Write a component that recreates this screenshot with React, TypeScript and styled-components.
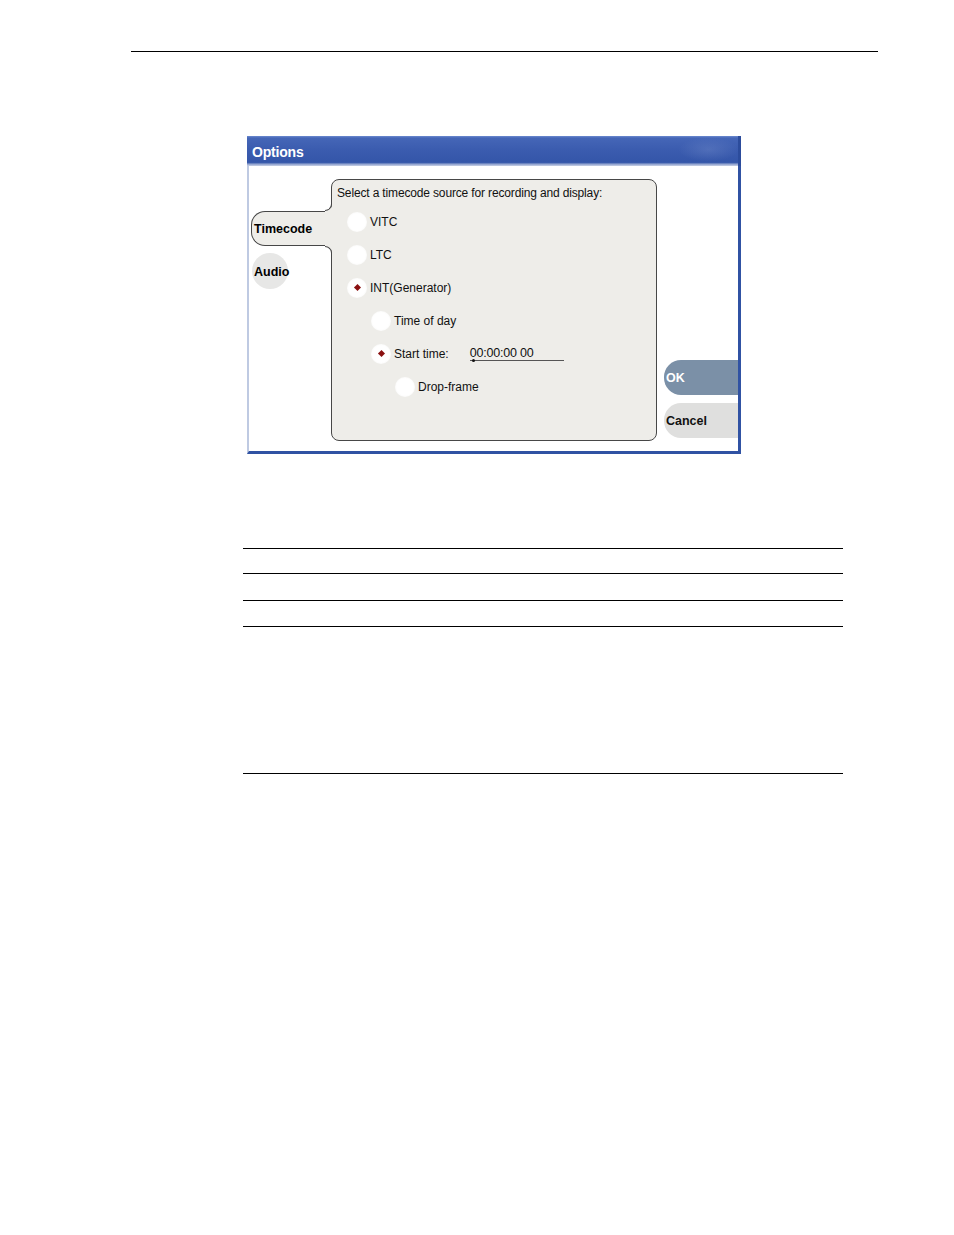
import React from "react";
import styled, { createGlobalStyle } from "styled-components";

const PANEL = "#eeede9";
const EDGE = "#474747";

const Global = createGlobalStyle`
  html, body { margin: 0; padding: 0; background: #fff; }
  body { font-family: "Liberation Sans", Arial, sans-serif; color: #111; }
`;

const Page = styled.div`
  width: 954px;
  min-height: 1235px;
  display: flex;
  flex-direction: column;
`;

const TopRule = styled.div`
  margin: 51px 0 0 131px;
  width: 747px;
  height: 1px;
  background: #000;
`;

const Dialog = styled.div`
  margin: 84px 0 0 247px;
  width: 494px;
  display: flex;
  flex-direction: column;
`;

const TitleBar = styled.div`
  height: 30px;
  box-sizing: border-box;
  padding: 2px 0 0 5px;
  display: flex;
  align-items: center;
  border-right: 3px solid #2c4c9c;
  background:
    radial-gradient(ellipse 30px 12px at 94% 45%, rgba(120, 145, 205, 0.35), rgba(120, 145, 205, 0) 100%),
    linear-gradient(180deg, #6c8bd0 0px, #4566b7 2px, #3b5caf 45%, #3456a9 88%, #90a2cf 94%, #c9d1e5 100%);
  color: #fff;
  font-weight: bold;
  font-size: 14px;
  letter-spacing: -0.2px;
`;

const Body = styled.div`
  height: 288px;
  box-sizing: border-box;
  background: #fff;
  border-left: 2px solid #bfcae2;
  border-right: 3px solid #3052a3;
  border-bottom: 3px solid #3052a3;
  padding: 13px 0 10px 0;
  display: flex;
`;

const TabColumn = styled.div`
  width: 82px;
  box-sizing: border-box;
  padding: 32px 0 0 2px;
  display: flex;
  flex-direction: column;
  align-items: flex-start;
`;

const ActiveTab = styled.div`
  position: relative;
  z-index: 1;
  width: 81px;
  height: 35px;
  box-sizing: border-box;
  border: 1px solid ${EDGE};
  border-right: none;
  border-radius: 14px 0 0 14px;
  background: ${PANEL};
  padding-left: 2px;
  display: flex;
  align-items: center;
  font-weight: bold;
  font-size: 12.5px;
  color: #000;

  &::before,
  &::after {
    content: "";
    position: absolute;
    right: 0;
    width: 7px;
    height: 7px;
    box-sizing: border-box;
  }
  &::before {
    top: -7px;
    border-right: 1px solid ${EDGE};
    border-bottom: 1px solid ${EDGE};
    border-bottom-right-radius: 7px;
    box-shadow: 3px 3px 0 3px ${PANEL};
    margin-top: -1px;
  }
  &::after {
    bottom: -8px;
    border-right: 1px solid ${EDGE};
    border-top: 1px solid ${EDGE};
    border-top-right-radius: 7px;
    box-shadow: 3px -3px 0 3px ${PANEL};
  }
`;

const IdleTab = styled.div`
  margin: 7px 0 0 1px;
  width: 36px;
  height: 36px;
  border-radius: 50%;
  background: #e7e7e6;
  padding: 2px 0 0 2px;
  box-sizing: border-box;
  display: flex;
  align-items: center;
  white-space: nowrap;
  font-weight: bold;
  font-size: 12.5px;
  color: #000;
`;

const Panel = styled.div`
  width: 326px;
  height: 262px;
  box-sizing: border-box;
  border: 1px solid ${EDGE};
  border-radius: 8px;
  background: ${PANEL};
  padding: 6px 0 0 15px;
  display: flex;
  flex-direction: column;
  font-size: 12px;
  color: #111;
`;

const Heading = styled.div`
  margin-left: -10px;
  height: 14px;
  line-height: 14px;
  margin-bottom: 5px;
  letter-spacing: -0.15px;
`;

const OptionRow = styled.div<{ $indent: number }>`
  height: 33px;
  display: flex;
  align-items: center;
  padding-left: ${(p) => p.$indent * 24}px;
`;

const Radio = styled.span<{ $on?: boolean }>`
  position: relative;
  flex: none;
  width: 20px;
  height: 20px;
  border-radius: 50%;
  background: radial-gradient(circle, #ffffff 0 58%, #fafaf9 72%, #f0efec 100%);
  margin-right: 3px;

  &::after {
    content: "";
    display: ${(p) => (p.$on ? "block" : "none")};
    position: absolute;
    left: 7.5px;
    top: 7.5px;
    width: 5px;
    height: 5px;
    background: #8a1010;
    transform: rotate(45deg);
  }
`;

const Label = styled.span`
  line-height: 14px;
  white-space: nowrap;
`;

const TimeField = styled.span`
  position: relative;
  margin-left: 21px;
  width: 94px;
  height: 15px;
  line-height: 14px;
  box-sizing: border-box;
  border-bottom: 1px solid #555;
  font-size: 12.5px;
  letter-spacing: -0.2px;
  margin-top: -1px;

  &::after {
    content: "";
    position: absolute;
    left: 2px;
    bottom: -2.5px;
    width: 3px;
    height: 3px;
    border-radius: 50%;
    background: #111;
  }
`;

const ButtonColumn = styled.div`
  flex: 1;
  margin-left: 7px;
  padding-bottom: 3px;
  display: flex;
  flex-direction: column;
  justify-content: flex-end;
  gap: 8px;
`;

const PillButton = styled.div<{ $primary?: boolean }>`
  height: 35px;
  border-radius: 17px 0 0 17px;
  background: ${(p) => (p.$primary ? "#7b90a7" : "#dfdfde")};
  color: ${(p) => (p.$primary ? "#fff" : "#111")};
  padding-left: 2px;
  display: flex;
  align-items: center;
  font-weight: bold;
  font-size: 12.5px;
`;

const Table = styled.div`
  margin: 94px 0 0 243px;
  width: 600px;
  border-top: 1px solid #000;
  display: flex;
  flex-direction: column;
`;

const TableRow = styled.div<{ $h: number }>`
  height: ${(p) => p.$h}px;
  border-bottom: 1px solid #000;
`;

const options: { label: string; indent: number; on?: boolean; field?: string }[] = [
  { label: "VITC", indent: 0 },
  { label: "LTC", indent: 0 },
  { label: "INT(Generator)", indent: 0, on: true },
  { label: "Time of day", indent: 1 },
  { label: "Start time:", indent: 1, on: true, field: "00:00:00 00" },
  { label: "Drop-frame", indent: 2 },
];

export default function App() {
  return (
    <>
      <Global />
      <Page>
        <TopRule />
        <Dialog>
          <TitleBar>Options</TitleBar>
          <Body>
            <TabColumn>
              <ActiveTab>Timecode</ActiveTab>
              <IdleTab>Audio</IdleTab>
            </TabColumn>
            <Panel>
              <Heading>Select a timecode source for recording and display:</Heading>
              {options.map((o) => (
                <OptionRow key={o.label} $indent={o.indent}>
                  <Radio $on={o.on} />
                  <Label>{o.label}</Label>
                  {o.field && <TimeField>{o.field}</TimeField>}
                </OptionRow>
              ))}
            </Panel>
            <ButtonColumn>
              <PillButton $primary>OK</PillButton>
              <PillButton>Cancel</PillButton>
            </ButtonColumn>
          </Body>
        </Dialog>
        <Table>
          <TableRow $h={24} />
          <TableRow $h={26} />
          <TableRow $h={25} />
          <TableRow $h={146} />
        </Table>
      </Page>
    </>
  );
}
